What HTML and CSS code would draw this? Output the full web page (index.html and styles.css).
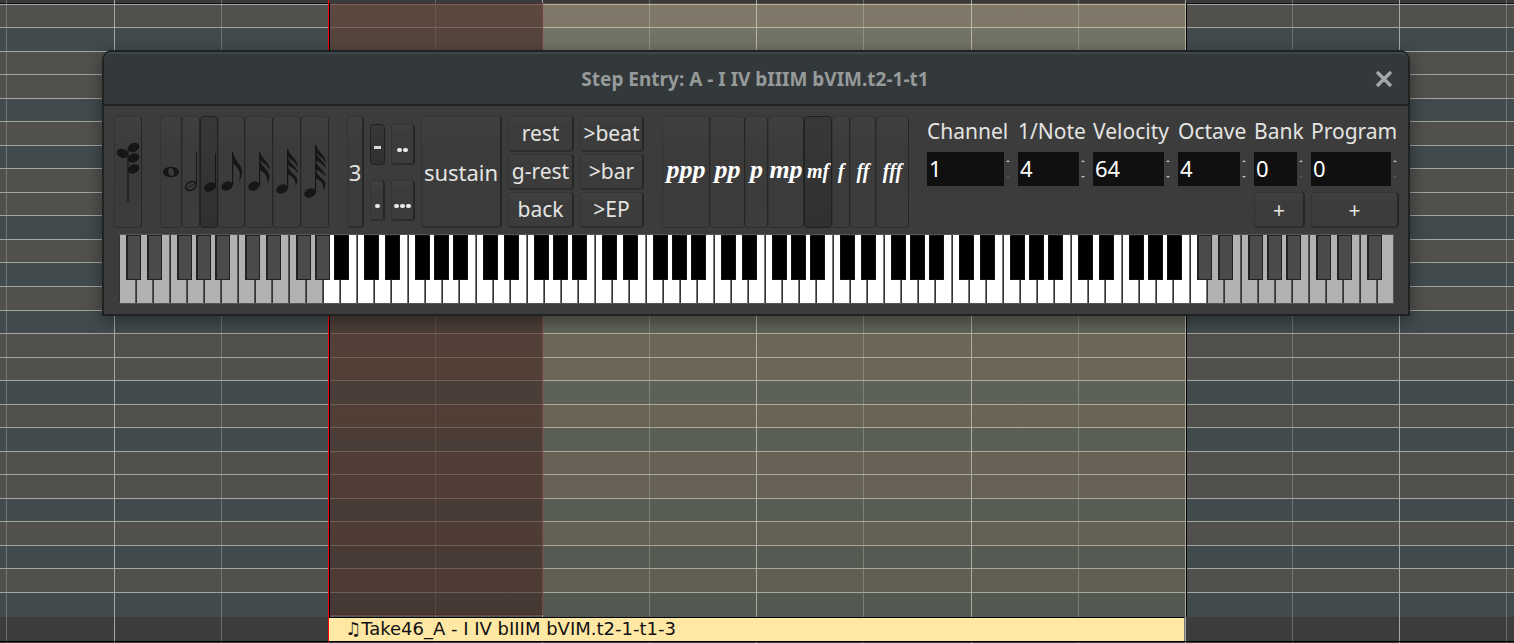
FILE: index.html
```
<!DOCTYPE html>
<html lang="en">
<head>
<meta charset="utf-8">
<title>Step Entry</title>
<link rel="stylesheet" href="styles.css">
</head>
<body>
<main class="timeline">
  <div class="ruler"></div>
  <div class="lanes" id="lanes"></div>
  <div class="footer-lane"></div>
  <div class="beats" id="beats"></div>
  <div class="clip"></div>
  <div class="selection"></div>
  <div class="clip-name">♫Take46_A - I IV bIIIM bVIM.t2-1-t1-3</div>
  <div class="playhead"></div>
  <div class="base-line"></div>

  <section class="window" aria-labelledby="window-title">
    <header class="titlebar">
      <h1 class="title" id="window-title">Step Entry: A - I IV bIIIM bVIM.t2-1-t1</h1>
      <button class="close" aria-label="Close"><svg width="18" height="18" viewBox="0 0 18 18"><path d="M2 2L16 16M16 2L2 16" stroke="#a3a7a7" stroke-width="3.4"/></svg></button>
    </header>
    <div class="body">
      <div class="toolbar">
        <button class="btn chord" aria-label="Chord">
          <svg width="26" height="110" viewBox="0 0 26 110" fill="#151617"><path d="M12 32h2v53h-2z" fill="#242525"/><ellipse cx="18.5" cy="30.500" rx="6" ry="4.300" transform="rotate(-25 18.500 30.500)"/><ellipse cx="7.500" cy="36.500" rx="6" ry="4.300" transform="rotate(25 7.500 36.500)"/><ellipse cx="18.500" cy="41" rx="6" ry="4.300" transform="rotate(-25 18.500 41)"/><ellipse cx="18.500" cy="52" rx="6" ry="4.300" transform="rotate(-25 18.500 52)"/></svg>
        </button>
        <div class="strip" role="group" aria-label="Note length">
          <button class="btn n1" aria-label="Whole"><svg width="20" height="110" viewBox="0 0 20 110"><path fill-rule="evenodd" fill="#151617" d="M10 50c4.600 0 8 2 8 5s-3.400 5-8 5-8-2-8-5 3.400-5 8-5zM9 51c-3 .500-2.300 7.500 2 8 3.500-.500 2.600-8-2-8z"/></svg></button>
          <button class="btn n2" aria-label="Half"><svg width="16" height="110" viewBox="0 0 16 110"><path d="M13 35h1v32h-1z" fill="#151617"/><ellipse cx="8" cy="69" rx="5.800" ry="3.900" fill="none" stroke="#151617" stroke-width="1.500" transform="rotate(-32 8 69)"/><path d="M4 71.500L12 66.500" stroke="#151617"/></svg></button>
          <button class="btn n4" aria-label="Quarter" aria-pressed="true"><svg width="16" height="110" viewBox="0 0 16 110"><g fill="#151617"><path d="M14 36h1v33h-1z"/><ellipse cx="9" cy="70" rx="6.300" ry="4.300" transform="rotate(-25 9 70)"/></g></svg></button>
          <button class="btn n8" aria-label="Eighth"><svg width="25" height="110" viewBox="0 0 25 110"><g fill="#151617"><ellipse cx="8" cy="69" rx="6" ry="4.300" transform="rotate(-25 8 69)"/><path d="M13 35h1.200c1 9 9.800 13 8.800 21q-.500 5-3 8.500q3.500-11-5.800-18V68H13z"/></g></svg></button>
          <button class="btn n16" aria-label="Sixteenth"><svg width="26" height="110" viewBox="0 0 26 110"><g fill="#151617"><ellipse cx="8" cy="69" rx="6" ry="4.300" transform="rotate(-25 8 69)"/><path d="M13 35h1.200c1 7 10.800 11 9.300 18.500C22 48 17 46 14.200 43V68H13z"/><path d="M14 44c2 6 10 10 9.500 16q-.500 4-2 7q1.500-9-7.500-14z"/></g></svg></button>
          <button class="btn n32" aria-label="Thirty-second"><svg width="26" height="110" viewBox="0 0 26 110"><g fill="#151617"><ellipse cx="8" cy="72" rx="6" ry="4.300" transform="rotate(-25 8 72)"/><path d="M13 32h1.200c1 7 10.800 11 9.300 18.500C22 45 17 43 14.200 40V71H13z"/><path d="M14 41c2 6 10 9 9.500 15.500C21 51 17 51 14 48zM14 50c2 6 10 9 9.500 13q-.500 4-2 7q1.500-8-7.500-13z"/></g></svg></button>
          <button class="btn n64" aria-label="Sixty-fourth"><svg width="26" height="110" viewBox="0 0 26 110"><g fill="#151617"><ellipse cx="8" cy="76" rx="6" ry="4.300" transform="rotate(-25 8 76)"/><path d="M13 28h1.200c1 7 10.800 11 9.300 18.500C22 41 17 39 14.200 36V75H13z"/><path d="M14 36c2 6 10 9 9.500 15.500C21 46 17 46 14 43zM14 45c2 6 10 9 9.500 15C21 55 17 55 14 52zM14 54c2 6 10 9 9.500 13q-.500 4-2 7q1.500-8-7.500-13z"/></g></svg></button>
        </div>
        <div class="group">
          <button class="btn triplet">3</button>
          <div class="dots">
            <button class="btn" aria-label="No dot" aria-pressed="true"><span class="dash"></span></button>
            <button class="btn" aria-label="Double dot"><span class="dot"></span><span class="dot"></span></button>
            <button class="btn" aria-label="Single dot"><span class="dot"></span></button>
            <button class="btn" aria-label="Triple dot"><span class="dot"></span><span class="dot"></span><span class="dot"></span></button>
          </div>
          <button class="btn sustain">sustain</button>
          <div class="actions">
            <button class="btn">rest</button><button class="btn">&gt;beat</button>
            <button class="btn">g-rest</button><button class="btn">&gt;bar</button>
            <button class="btn">back</button><button class="btn">&gt;EP</button>
          </div>
        </div>
        <div class="strip" role="group" aria-label="Dynamics">
          <button class="btn dyn d-ppp">ppp</button>
          <button class="btn dyn d-pp">pp</button>
          <button class="btn dyn d-p">p</button>
          <button class="btn dyn d-mp">mp</button>
          <button class="btn dyn loud d-mf" aria-pressed="true">mf</button>
          <button class="btn dyn loud d-f">f</button>
          <button class="btn dyn loud d-ff">ff</button>
          <button class="btn dyn loud d-fff">fff</button>
        </div>
        <div class="fields">
          <div class="field"><label for="channel">Channel</label><div class="spin"><input id="channel" type="number" value="1"><span class="steps"><button class="up" aria-label="Channel up"></button><button class="down off" aria-label="Channel down"></button></span></div></div>
          <div class="field"><label for="note">1/Note</label><div class="spin"><input id="note" type="number" value="4"><span class="steps"><button class="up" aria-label="Note up"></button><button class="down" aria-label="Note down"></button></span></div></div>
          <div class="field"><label for="velocity">Velocity</label><div class="spin"><input id="velocity" type="number" value="64"><span class="steps"><button class="up" aria-label="Velocity up"></button><button class="down" aria-label="Velocity down"></button></span></div></div>
          <div class="field"><label for="octave">Octave</label><div class="spin"><input id="octave" type="number" value="4"><span class="steps"><button class="up" aria-label="Octave up"></button><button class="down" aria-label="Octave down"></button></span></div></div>
          <div class="field"><label for="bank">Bank</label><div class="spin"><input id="bank" type="number" value="0"><span class="steps"><button class="up" aria-label="Bank up"></button><button class="down off" aria-label="Bank down"></button></span></div><button class="btn plus" aria-label="Add bank">+</button></div>
          <div class="field"><label for="program">Program</label><div class="spin"><input id="program" type="number" value="0"><span class="steps"><button class="up" aria-label="Program up"></button><button class="down off" aria-label="Program down"></button></span></div><button class="btn plus" aria-label="Add program">+</button></div>
        </div>
      </div>
      <div class="piano" id="piano"></div>
    </div>
  </section>
</main>
<script src="app.js"></script>
</body>
</html>
```
FILE: app.js
```
// Lanes from top to bottom: w = natural key, b = sharp key.
const lanes = document.getElementById('lanes');
[...'wbwwbwbwwbwbwbwwbwbwwbwbwb'].forEach((kind, i) => {
  const lane = document.createElement('div');
  const tall = i < 12 ? i % 2 === 1 : i % 2 === 0;
  lane.className = 'lane' + (kind === 'b' ? ' sharp' : '') + (tall ? ' tall' : '');
  lanes.append(lane);
});

const beats = document.getElementById('beats');
for (let i = 0; i < 16; i++) {
  const beat = document.createElement('div');
  beat.className = 'beat' + (i > 0 && i % 2 === 0 ? ' strong' : '');
  beats.append(beat);
}

// MIDI notes 0-127; the 88 keys of a real piano are enabled.
const piano = document.getElementById('piano');
const WHITE = 75;
const sharpAt = { 1: 7, 3: 28, 6: 58, 8: 77, 10: 96 };
const names = ['C', 'C#', 'D', 'D#', 'E', 'F', 'F#', 'G', 'G#', 'A', 'A#', 'B'];
for (let n = 0; n < 128; n++) {
  const key = document.createElement('button');
  const pitch = n % 12;
  const octave = Math.floor(n / 12);
  const sharp = pitch in sharpAt;
  key.className = 'key ' + (sharp ? 'black' : 'white') + (n < 21 || n > 108 ? ' out' : '');
  key.setAttribute('aria-label', names[pitch] + (octave - 1));
  if (sharp) key.style.left = (octave * 119 + sharpAt[pitch]) / (WHITE * 17) * 100 + '%';
  piano.append(key);
}
```
FILE: styles.css
```
* { box-sizing: border-box; }
body { margin: 0; background: #3c3c3a; color: #e4e4e2; font-family: "Noto Sans", sans-serif; }
button { margin: 0; padding: 0; border: 0; background: none; color: inherit; font: inherit; }

.timeline { position: relative; min-height: 100vh; overflow: hidden; }
.ruler { height: 4px; background: #3a3a3a; border-bottom: 1px solid #111; }
.lane { height: 23px; background: #51504d; border-top: 1px solid #a3a5a2; }
.lane.sharp { background: #414b4d; }
.lane.tall { height: 24px; }
.lane:last-child { height: 25px; }
.footer-lane { height: 26px; background: #3c3c3a; }
.base-line { position: absolute; left: 0; right: 0; top: 641px; height: 1px; background: #000; }

.beats { position: absolute; inset: 0; display: grid; grid-template-columns: 6px 108px repeat(7, 107px) 108px repeat(5, 107px) 1fr; overflow: hidden; }
.beat { border-left: 1px solid rgba(160, 168, 165, .45); }
.beat.strong { border-left-color: #a3a8a5; }
.beat:first-child { border: 0; }

.clip { position: absolute; left: 329px; top: 3px; width: 858px; height: 614px; border-right: 1px solid #000; border-left: 1px solid #000; background: linear-gradient(rgba(250, 222, 172, .28), rgba(225, 202, 140, .19) 55%, rgba(205, 180, 102, .12)); }
.selection { position: absolute; left: 330px; top: 3px; width: 213px; height: 612px; background: rgba(60, 30, 26, .53); border-right: 1px solid #7d4340; border-bottom: 1px solid #5e2424; }
.clip-name { position: absolute; left: 329px; top: 617px; width: 856px; height: 24px; padding-left: 16px; border-top: 1px solid #000; border-right: 1px solid #777; background: #ffe7a4; color: #111; font: 18px/21px "DejaVu Sans", sans-serif; white-space: nowrap; }
.playhead { position: absolute; left: 328px; top: 0; bottom: 0; width: 1px; background: #f00; }

.window { position: absolute; left: 102px; right: 104px; top: 50px; border: 2px solid #1e2223; border-radius: 10px 10px 0 0; background: #3c3c3c; box-shadow: 0 5px 18px rgba(0, 0, 0, .4); }
.titlebar { display: flex; align-items: center; height: 54px; padding: 0 15px 0 31px; border-top: 2px solid #3f4649; border-bottom: 2px solid #1f2324; border-radius: 8px 8px 0 0; background: #33383b; }
.title { flex: 1; margin: 0; color: #969a9a; text-align: center; font: bold 19px/26px "Noto Sans", sans-serif; }
.close { display: flex; }
.body { padding: 10px 9px 10px 10px; }
.toolbar { display: flex; gap: 18px; height: 112px; margin-bottom: 6px; }
.strip { display: flex; }
.group { display: flex; gap: 6px; }

.btn { display: flex; align-items: center; justify-content: center; border: 1px solid #343434; border-right: 2px solid #252727; border-bottom: 2px solid #2c2d2d; border-radius: 4px; background: linear-gradient(#404040, #3b3b3b 30%, #3c3c3c); font-size: 22px; line-height: 30px; white-space: nowrap; }
.btn[aria-pressed="true"] { border: 1px solid #1f2121; background: linear-gradient(#383838, #303030); }
.strip .btn, .chord { border-bottom-width: 1px; border-right-width: 1px; flex: none; }
.btn svg { flex: none; }
.chord { width: 28px; }
.n1 { width: 22px; }
.n2, .n4 { width: 18px; }
.n8 { width: 27px; }
.n16, .n32, .n64 { width: 28px; }
.triplet { width: 17px; }
.dots { display: grid; grid-template-columns: 15px 24px; grid-template-rows: 41px 41px; gap: 15px 6px; align-content: center; }
.dots .btn { gap: 1px; padding-top: 12px; }
.dash { width: 7px; height: 3px; margin-bottom: 6px; background: #d8d8d6; }
.dot { width: 5px; height: 4px; border-radius: 2px; background: #e8e8e6; }
.sustain { width: 81px; }
.actions { display: grid; grid-template-columns: 66px 64px; grid-template-rows: repeat(3, 36px); gap: 2px 6px; }
.actions .btn { padding-bottom: 1px; font-size: 21px; }

.dyn { padding-bottom: 4px; color: #fff; font: italic bold 26px/30px "Liberation Serif", serif; }
.dyn.loud { padding-bottom: 2px; font-size: 20px; }
.d-ppp { width: 48px; }
.d-pp { width: 35px; }
.d-p { width: 23px; }
.d-mp { width: 36px; }
.d-mf { width: 28px; }
.d-f { width: 18px; }
.d-ff { width: 26px; }
.d-fff { width: 33px; }

.fields { display: flex; gap: 6px; }
.field { display: flex; flex-direction: column; }
.field label { height: 36px; font-size: 21px; line-height: 30px; white-space: nowrap; }
.field:nth-child(1) { width: 85px; }
.field:nth-child(2) { width: 69px; }
.field:nth-child(3) { width: 79px; }
.field:nth-child(4) { width: 70px; }
.field:nth-child(5) { width: 51px; }
.field:nth-child(6) { width: 88px; }
.spin { display: flex; height: 34px; }
.spin input { flex: 1; min-width: 0; height: 34px; padding: 0 2px 2px; border: 0; border-radius: 0; background: #101010; color: #fff; font: 22px/32px "Noto Sans", sans-serif; appearance: textfield; }
.spin input::-webkit-inner-spin-button { display: none; }
.steps { display: flex; flex-direction: column; justify-content: space-between; align-items: center; width: 8px; padding: 8px 0; }
.up, .down { width: 0; height: 0; border: 2px solid transparent; }
.up { border-top: 0; border-bottom-color: #b8b8b8; }
.down { border-bottom: 0; border-top-color: #b8b8b8; }
.down.off { border-top-color: #555; }
.plus { height: 36px; margin-top: 6px; font-size: 21px; }

.piano { position: relative; display: grid; grid-template-columns: repeat(75, 1fr); height: 70px; margin: 0 5px; border-top: 1px solid #555; border-bottom: 1px solid #555; }
.white { height: 68px; border-left: 1px solid #333; border-right: 1px solid #777; background: #fff; }
.white.out { background: #b1b1b1; border-right-color: #555; }
.black { position: absolute; top: 0; width: 15px; height: 45px; border: 1px solid #111; background: #000; }
.black.out { border: 1px solid #222; border-left-width: 2px; background: #4b4b4b; }
```
